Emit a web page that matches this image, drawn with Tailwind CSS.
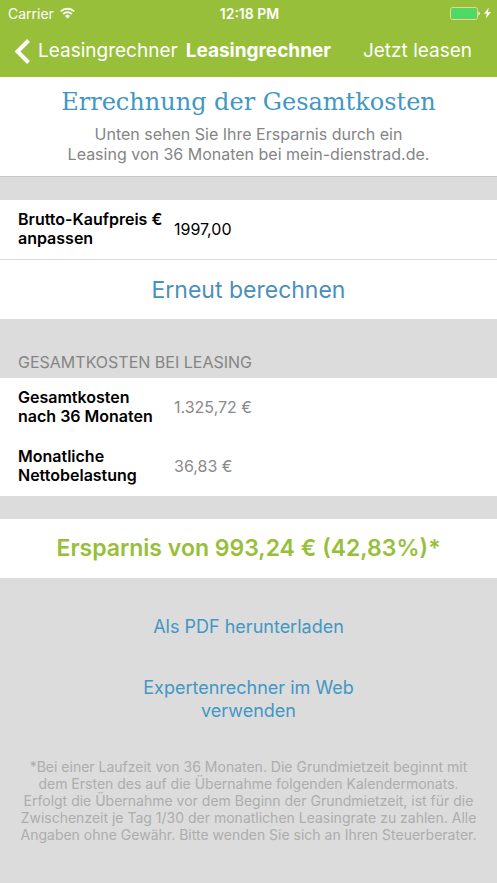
<!DOCTYPE html>
<html lang="de">
<head>
    <meta charset="UTF-8">
    <meta name="viewport" content="width=device-width, initial-scale=1.0">
    <title>Leasingrechner</title>
    <script src="https://cdn.jsdelivr.net/npm/@tailwindcss/browser@4"></script>
</head>
<body class="flex flex-col min-h-screen bg-[#dcdcdc] font-['Inter','Liberation_Sans',sans-serif]">
    <header class="bg-[#97bf3a] text-white">
        <div class="grid grid-cols-3 items-center h-[26px] pl-2 pr-[6px] text-[14px]">
            <div class="flex items-center gap-[6px]">
                <span>Carrier</span>
                <svg class="w-[15px] h-3" viewBox="0 0 15 12" fill="none" stroke="currentColor" stroke-width="2" aria-hidden="true">
                    <path d="M0.8 4.4a9.5 9.5 0 0 1 13.4 0" />
                    <path d="M3.2 7.1a6.1 6.1 0 0 1 8.6 0" />
                    <path d="M7.5 11.5 5 9a3.6 3.6 0 0 1 5 0z" fill="currentColor" stroke="none" />
                </svg>
            </div>
            <span class="text-center font-semibold">12:18 PM</span>
            <div class="flex items-center justify-end gap-1">
                <svg class="w-[30px] h-[13px]" viewBox="0 0 30 13" aria-hidden="true">
                    <rect x="0.5" y="0.5" width="27" height="12" rx="2" fill="none" stroke="#cfe2a4" />
                    <rect x="1.5" y="1.5" width="25" height="10" rx="1" fill="#4cd964" />
                    <path d="M28.5 4.5a2.2 2.2 0 0 1 0 4z" fill="#fff" />
                </svg>
                <svg class="w-[7px] h-3" viewBox="0 0 7 12" fill="currentColor" aria-hidden="true">
                    <path d="M4.8 0.5 0 6.8h2.9L1.9 11.5 7 5H4z" />
                </svg>
            </div>
        </div>
        <nav class="flex items-center h-[51px] pl-[14px] pr-[25px] text-[19px]">
            <a href="#" class="flex items-center gap-2">
                <svg class="w-4 h-[25px]" viewBox="0 0 16 25" fill="none" stroke="currentColor" stroke-width="4" aria-hidden="true">
                    <path d="M14.5 1.5 3.5 12.5l11 11" />
                </svg>
                Leasingrechner
            </a>
            <h1 class="ml-2 font-bold">Leasingrechner</h1>
            <a href="#" class="ml-auto">Jetzt leasen</a>
        </nav>
    </header>

    <main>
        <section class="bg-white border-b border-[#c8c8c8] pt-[7px] pb-3 text-center">
            <h2 class="text-[24px] leading-9 text-[#4297c4] font-['DejaVu_Serif',serif]">Errechnung der Gesamtkosten</h2>
            <p class="mt-1 text-base leading-5 text-[#858585]">Unten sehen Sie Ihre Ersparnis durch ein<br>Leasing von 36 Monaten bei mein-dienstrad.de.</p>
        </section>

        <form class="mt-[23px] bg-white" onsubmit="return false">
            <div class="flex items-center h-[60px] px-[18px] pb-[2px] border-b border-[#dcdcdc]">
                <label for="price" class="w-[156px] shrink-0 text-[16px] leading-[19px] font-semibold text-black">Brutto-Kaufpreis €<br>anpassen</label>
                <input type="text" id="price" value="1997,00" class="flex-1 min-w-0 text-[16px] text-black outline-none">
            </div>
            <button type="submit" class="w-full h-[59px] pt-[2px] text-[23px] text-[#4a90b8]">Erneut berechnen</button>
        </form>

        <section>
            <h2 class="pt-8 pb-[5px] px-[18px] text-base leading-[22px] text-[#858585]">GESAMTKOSTEN BEI LEASING</h2>
            <dl class="bg-white text-[16px]">
                <div class="flex items-center h-[59px] px-[18px] pb-[2px]">
                    <dt class="w-[156px] shrink-0 leading-[19px] font-semibold text-black">Gesamtkosten<br>nach 36 Monaten</dt>
                    <dd class="text-[#8a8a8a]">1.325,72 €</dd>
                </div>
                <div class="flex items-center h-[59px] px-[18px] pb-[2px]">
                    <dt class="w-[156px] shrink-0 leading-[19px] font-semibold text-black">Monatliche<br>Nettobelastung</dt>
                    <dd class="text-[#8a8a8a]">36,83 €</dd>
                </div>
            </dl>
        </section>

        <p class="mt-[23px] bg-white text-center text-[23px] leading-[59px] font-semibold text-[#97bf3a]">Ersparnis von 993,24 € (42,83%)*</p>

        <div class="flex flex-col items-center gap-[38px] mt-[37px] text-center text-[18px] leading-[23px] text-[#4297c4]">
            <a href="#">Als PDF herunterladen</a>
            <a href="#">Expertenrechner im Web<br>verwenden</a>
        </div>

        <p class="mt-9 px-2 text-center text-[14px] leading-[17px] text-[#adadad]">*Bei einer Laufzeit von 36 Monaten. Die Grundmietzeit beginnt mit<br>dem Ersten des auf die Übernahme folgenden Kalendermonats.<br>Erfolgt die Übernahme vor dem Beginn der Grundmietzeit, ist für die<br>Zwischenzeit je Tag 1/30 der monatlichen Leasingrate zu zahlen. Alle<br>Angaben ohne Gewähr. Bitte wenden Sie sich an Ihren Steuerberater.</p>
    </main>
</body>
</html>
